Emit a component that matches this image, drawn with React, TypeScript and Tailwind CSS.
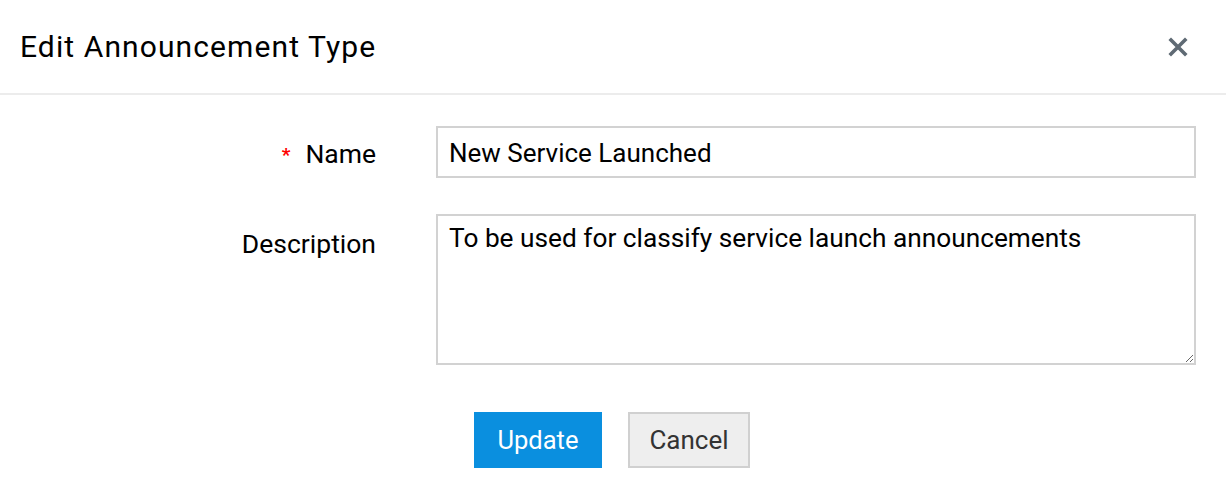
import { useState } from "react";

export default function App() {
  const [name, setName] = useState("New Service Launched");
  const [desc, setDesc] = useState("To be used for classify service launch announcements");

  return (
    <div className="w-[1226px] h-[488px] bg-white text-black" style={{ fontFamily: "Roboto, 'Liberation Sans', sans-serif" }}>
      <div className="h-[95px] flex items-center justify-between pl-5 pr-[38px] border-b-2 border-[#ececec]">
        <h1 className="text-[30px] tracking-[1.1px] leading-none pt-[1px]">Edit Announcement Type</h1>
        <button type="button" className="text-[#5f6a74]" aria-label="Close">
          <svg width="20" height="20" viewBox="0 0 20 20">
            <path d="M3 3 L17 17 M17 3 L3 17" stroke="currentColor" strokeWidth="3.6" strokeLinecap="square" />
          </svg>
        </button>
      </div>

      <div className="pt-[31px] pr-[30px]">
        <div className="flex items-center">
          <label className="w-[376px] text-right text-[26.5px] leading-none pt-[4px]">
            <span className="text-[#ff0000] text-[19px] font-bold mr-[15px] relative top-[-2px]">*</span>Name
          </label>
          <input
            value={name}
            onChange={e => setName(e.target.value)}
            className="ml-[60px] flex-1 h-[52px] border-2 border-[#d2d2d2] px-[11px] pt-[2px] text-[26px] outline-none"
          />
        </div>

        <div className="flex mt-[36px]">
          <label className="w-[376px] text-right text-[26.5px] leading-none pt-[17px]">Description</label>
          <textarea
            value={desc}
            onChange={e => setDesc(e.target.value)}
            className="ml-[60px] flex-1 h-[151px] border-2 border-[#d2d2d2] px-[11px] pt-[5px] text-[26.25px] leading-[34px] outline-none resize-y"
          />
        </div>

        <div className="flex justify-center gap-[26px] mt-[47px] pl-[28px]">
          <button type="button" className="w-[128px] h-[56px] bg-[#0a8fdf] text-white text-[25.5px]">Update</button>
          <button type="button" className="w-[122px] h-[56px] bg-[#eeeeee] border-2 border-[#d0d0d0] text-[#333] text-[26px]">Cancel</button>
        </div>
      </div>
    </div>
  );
}
